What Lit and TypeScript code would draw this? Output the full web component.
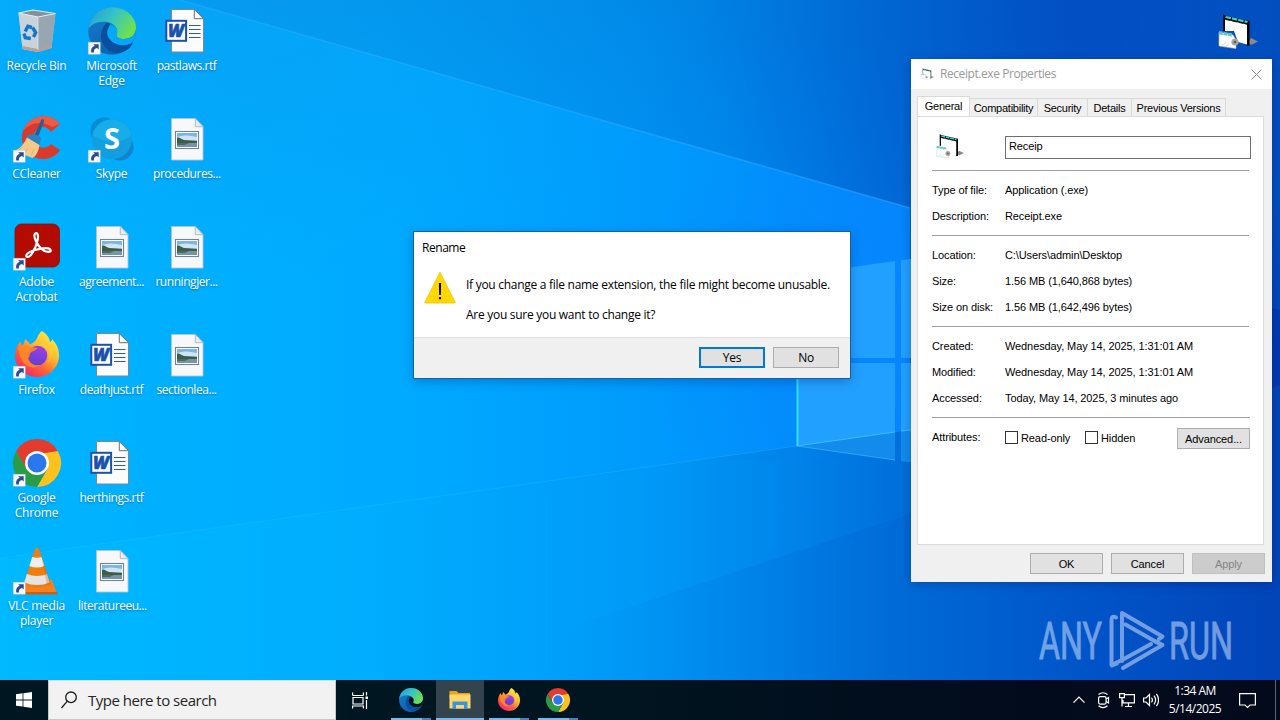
import { LitElement, css, html, svg } from 'lit'
import { customElement, property } from 'lit/decorators.js'
import { classMap } from 'lit/directives/class-map.js'

const shortcutArrow = svg`
  <rect x="0.2" y="35.2" width="12" height="12" fill="#f6f8fc" stroke="#b9c6d6" stroke-width=".5"/>
  <path d="M3.4 45.6c-.9-3.6.6-6.2 3.4-6.7l-1.5-1.7h5.4v5.4l-1.6-1.5c-2.2.3-3.5 1.7-3.2 4.5z" fill="#2b4c8c"/>
`

const exeShape = svg`
  <path d="M33 24l7 3.500-7 3.500-3-3z" fill="#8b8b8b"/>
  <path d="M5.200 0l1.800 1.500L31.500 7V31.500h-3V11L7 6v11H5.200z" fill="#000"/>
  <path d="M7 5.500L29 10.500V30.500l-9-2.500-4-11H7z" fill="#fff"/>
  <path d="M7.500 3L29.500 8" stroke="#3fd0cb" stroke-width="2.300" stroke-dasharray="5.500 1"/>
  <path d="M7.500 5.400L29 10.200" stroke="#111" stroke-width=".9" stroke-dasharray="4.500 2.300"/>
  <path d="M1 18l14 3 3 5v8.500L1 32z" fill="#fff" stroke="#b9c0c6" stroke-width=".6"/>
  <path d="M1 18.700l13 2.200" stroke="#62c6c8" stroke-width="3.200" stroke-dasharray="4 .6"/>
  <path d="M4 31.500l4-3M7 33l4-3" stroke="#d5d5dc" stroke-width="1"/>
  <circle cx="17" cy="28" r="3.600" fill="#a9a79b"/>
  <circle cx="17" cy="28" r="1.300" fill="#5d5d55"/>
`

const edgeShape = svg`
  <defs>
    <linearGradient id="e1" x1="0" y1="0" x2="1" y2=".5">
      <stop offset="0" stop-color="#209ad8"/><stop offset=".5" stop-color="#35c1c9"/><stop offset="1" stop-color="#6be053"/>
    </linearGradient>
    <linearGradient id="e2" x1="0" y1="0" x2=".4" y2="1">
      <stop offset="0" stop-color="#1480cb"/><stop offset="1" stop-color="#0d62b4"/>
    </linearGradient>
  </defs>
  <circle cx="24" cy="24" r="23.800" fill="url(#e2)"/>
  <path d="M.4 22C2 9 12 .2 24 .2 38 .2 48 10 48 20.500c0 7-5 11.500-12 11.500-6 0-8.500-2.500-7.500-4.500 2.500-4-1-11-9.500-12.500C10 13.500 3 17 .4 22z" fill="url(#e1)"/>
  <path d="M19 15.500c-5 5-7.500 12-5 19C17.500 44 27 48.500 36 44.500c4-1.800 6.500-4 8.300-7.200.5-1-.2-1.500-1.200-1-7.500 3.800-18 1.700-22.500-5.500-2.500-4.200-2-9.500 2.200-13.600z" fill="#0a4f9d"/>
  <path d="M43.100 36.300c-7.500 3.800-18 1.700-22.500-5.500-2.200-4-1.500-9.300 2.200-13.600 6 2.200 8 6.800 5.700 10.300-1 2 1.500 4.500 7.500 4.500 6 0 10.500-3.200 11.700-8 .2 5.300-1.500 9.500-4.600 12.300z" fill="var(--edge-cut, #02a9fb)"/>
`

const chromeShape = svg`
  <path d="M3.200 12A24 24 0 0 1 44.800 12H24z" fill="#e33b2e"/>
  <path d="M44.800 12A24 24 0 0 1 24 48L34.400 30 34.400 18 24 12z" fill="#fcc31e"/>
  <path d="M24 48A24 24 0 0 1 3.200 12L13.600 30 24 34.500l10.400-4.500z" fill="#2a9c48"/>
  <path d="M3.200 12L13.600 30 20 16l24.800-4z" fill="#e33b2e"/>
  <circle cx="24" cy="24" r="12" fill="#fff"/>
  <circle cx="24" cy="24" r="9.500" fill="#2b78ee"/>
`

const firefoxShape = svg`
  <defs>
    <linearGradient id="f1" x1=".85" y1=".05" x2=".2" y2=".95">
      <stop offset="0" stop-color="#fff04a"/><stop offset=".4" stop-color="#ffb42c"/><stop offset=".68" stop-color="#ff6236"/><stop offset="1" stop-color="#f2246e"/>
    </linearGradient>
    <linearGradient id="f2" x1=".6" y1="0" x2=".3" y2="1">
      <stop offset="0" stop-color="#a13ce8"/><stop offset="1" stop-color="#5a43cf"/>
    </linearGradient>
  </defs>
  <path d="M29 0c5 3 7.500 7 8 11 1.500-.5 2-1.800 2-3 5 5 7.500 11 7 18-1 12-11 20-22 20S2 37 2 25c0-6 2-11 5.500-15 .3 2 1 3.500 2 4.500C11 12.800 12 9 12 8c2 1.500 4 3.500 5 5.500C21 12 24 8 24.500 6c1-2.500 2.500-5 4.500-6z" fill="url(#f1)"/>
  <circle cx="24.500" cy="24.500" r="9.800" fill="url(#f2)"/>
  <path d="M5 17c4-3.500 9-4 13-1.500 2 1 4.500 1.200 6.500 1.500-1 2.500-4.500 3-6 4-3 2-1 5-3.500 6 1 6 7 8.500 12 7-5 4-13 3-17-3-3-4.500-4-9-5-14z" fill="#ff8a24" opacity=".88"/>
  <path d="M25 15c5-1.500 10 1.500 11.500 6 1 4 0 8-2 11 6-4 7-13 1-18-3-2.500-7-2-10.500 1z" fill="#ffd03a" opacity=".75"/>
`

const wordShape = svg`
  <path d="M8.500 2.500h23l9 9v33.500h-32z" fill="#fcfcfd" stroke="#7b8794" stroke-width="1"/>
  <path d="M31.300 2.500v9.200h9.200z" fill="#fff" stroke="#66717c" stroke-width="1"/>
  <path d="M26 19.500h11.500M26 23.500h11.500M26 27.500h11.500M26 31.500h11.500" transform="translate(0 -1)" stroke="#2b5db0" stroke-width="1.100"/>
  <rect x="3.300" y="13.800" width="19.800" height="20" fill="#fff" stroke="#1a51ae" stroke-width="2"/>
  <text x="13" y="30" class="word-letter" text-anchor="middle">W</text>
`

const imageShape = svg`
  <path d="M8.500 3.500h24l7.500 8v33.500H8.500z" fill="#f7f8f9" stroke="#b5c3cd" stroke-width=".9"/>
  <path d="M32.300 3.500v8.200H40z" fill="#e9edf1" stroke="#9fb0bd" stroke-width=".8"/>
  <rect x="12.500" y="16.500" width="23" height="17" fill="#fff" stroke="#6e8596" stroke-width="1.100"/>
  <path d="M14 18h20v7H14z" fill="#7db5ea"/>
  <path d="M14 22q8-3 20 0v5H14z" fill="#cde5f5"/>
  <path d="M14 22.500c3-.5 4 1.500 7 2.500l13 .8V28H14z" fill="#3d5d44"/>
  <path d="M14 28h20v4H14z" fill="#7795a8"/>
  <path d="M14 28h12l-4 2h-8z" fill="#4c6b68"/>
`

const desktopIcons: Record<string, unknown> = {
  bin: svg`
    <path d="M5.500 6L9.500 42 25 45 38.500 41 42.500 6.500z" fill="#aebbc4"/>
    <path d="M5.500 6L25 9.500V45L9.500 42z" fill="#c8d3db"/>
    <path d="M25 9.500L42.500 6.500 38.500 41 25 45z" fill="#98a6b1"/>
    <path d="M9.200 39L25 42l13.800-3.600L38.400 41 25 45 9.500 42z" fill="#b99f97"/>
    <path d="M5.500 6L20 3l22.500 3.500L25 10z" fill="#83919c" stroke="#e3ecf2" stroke-width="1.200"/>
    <path d="M25 10v33" stroke="#dbe4ea" stroke-width=".8"/>
    <g fill="none" stroke="#1276cd" stroke-width="3.400">
      <path d="M12.200 24.500l2.700-5.200 4 1.200"/><path d="M19.500 20.500l3.200 5-2.200 4.500"/><path d="M17.800 31.500l-5.500-.8-1.300-4.200"/>
    </g>`,
  edge: svg`${edgeShape}${shortcutArrow}`,
  word: wordShape,
  image: imageShape,
  ccleaner: svg`
    <path d="M47 9C41 1 29-1 20 4 9 10 6 24 12 34c6 10 20 13 29 7 3-2 5-4 6-6l-9-6c-4 5-11 5-15 0-4-6-2-14 3-16 4-2 9-1 12 4z" fill="#d93a2b"/>
    <path d="M47 9C41 1 29-1 20 4c-5 2.500-8.500 7-10 12 7-8 18-11 29-4z" fill="#ee5a43"/>
    <path d="M28.500 4.500q3-1 2.500 2L25 22l-4-1z" fill="#245e94"/>
    <path d="M13 21q8-5 15 2l-2 9-12-8z" fill="#2f80c0"/>
    <path d="M14 22.500l12.500 7.500c-1 6-3 11-7 13L1 36c6-2 10-7 13-13.500z" fill="#f4c98a"/>
    <path d="M9 32l-5 5M15 33l-4 6M21 34l-3 7" stroke="#d9a869" stroke-width=".8"/>${shortcutArrow}`,
  skype: svg`
    <circle cx="16" cy="16" r="13.500" fill="#078bd4"/><circle cx="32" cy="32" r="13.500" fill="#1283d0"/>
    <circle cx="24" cy="24" r="20" fill="#119fe0"/>
    <path d="M4.500 20a20 20 0 0 1 39 0c-8 8-25 10-39 0z" fill="#18b0ea" opacity=".8"/>
    <text x="24" y="34" class="skype-letter" text-anchor="middle">S</text>${shortcutArrow}`,
  acrobat: svg`
    <rect x="2" y="1" width="44.500" height="43" rx="6.500" fill="#b30b00" stroke="#7c1712" stroke-width=".8"/>
    <path d="M14.500 34c-3-.5-1-4.500 7.500-7 7-2 14-2.500 15.500-.2 1.500 3-5 3-9-.8-5-4.500-8.500-13-6.500-15.200 2-2 4 1 2.500 6.700C22.500 26 17.500 34.500 14.500 34z" fill="none" stroke="#fff" stroke-width="2.200"/>${shortcutArrow}`,
  firefox: svg`${firefoxShape}${shortcutArrow}`,
  chrome: svg`${chromeShape}${shortcutArrow}`,
  vlc: svg`
    <path d="M12 33h27l5 14H7z" fill="#f58220"/>
    <path d="M7 45h37.500v2.500H7z" fill="#cf5f0c"/>
    <path d="M22 2q2-2 4 0l11.500 36q-13 6-27 0z" fill="#f17d0c"/>
    <path d="M19.200 10l-2.900 9q7.500 3 15.200 0L28.600 10q-4.700 1.500-9.400 0z" fill="#f0efed"/>
    <path d="M13.900 27l-2.700 8.500q13 5 25.500 0L34 27q-10 4-20.100 0z" fill="#e6e4e2"/>
    <path d="M27 3l7 35 4-1L26.500 2z" fill="#c95c05" opacity=".3"/>${shortcutArrow}`,
}

const files = [
  ['bin', 'Recycle Bin'],
  ['ccleaner', 'CCleaner'],
  ['acrobat', 'Adobe Acrobat'],
  ['firefox', 'Firefox'],
  ['chrome', 'Google Chrome'],
  ['vlc', 'VLC media player'],
  ['edge', 'Microsoft Edge'],
  ['skype', 'Skype'],
  ['image', 'agreement...'],
  ['word', 'deathjust.rtf'],
  ['word', 'herthings.rtf'],
  ['image', 'literatureeu...'],
  ['word', 'pastlaws.rtf'],
  ['image', 'procedures...'],
  ['image', 'runningjer...'],
  ['image', 'sectionlea...'],
]

@customElement('desktop-wallpaper')
export class DesktopWallpaper extends LitElement {
  static styles = css`
  :host {
    display: block;
  }

  svg {
    display: block;
    width: 1280px;
    height: 720px;
  }
`

  render() {
    return html`
      <svg viewBox="0 0 1280 720">
        <defs>
          <linearGradient id="base" gradientUnits="userSpaceOnUse" x1="0" y1="0" x2="1280" y2="0">
            <stop offset="0" stop-color="#00aefb"/>
            <stop offset=".3" stop-color="#00a6f8"/>
            <stop offset=".5" stop-color="#0096f4"/>
            <stop offset=".62" stop-color="#0083ea"/>
            <stop offset=".71" stop-color="#006dd9"/>
            <stop offset=".85" stop-color="#004fc6"/>
            <stop offset="1" stop-color="#0338b0"/>
          </linearGradient>
          <linearGradient id="beam" gradientUnits="userSpaceOnUse" x1="0" y1="0" x2="910" y2="0">
            <stop offset="0" stop-color="#00b4ff"/>
            <stop offset=".45" stop-color="#00aaff"/>
            <stop offset=".8" stop-color="#0095fc"/>
            <stop offset="1" stop-color="#0084fa"/>
          </linearGradient>
          <linearGradient id="top" gradientUnits="userSpaceOnUse" x1="560" y1="260" x2="640" y2="-20">
            <stop offset="0" stop-color="#0074e4" stop-opacity="0"/>
            <stop offset="1" stop-color="#0070cf" stop-opacity=".4"/>
          </linearGradient>
          <radialGradient id="dusk" gradientUnits="userSpaceOnUse" cx="1080" cy="20" r="380">
            <stop offset="0" stop-color="#0343bd" stop-opacity=".6"/>
            <stop offset=".45" stop-color="#034cc5" stop-opacity=".35"/>
            <stop offset="1" stop-color="#0350cc" stop-opacity="0"/>
          </radialGradient>
          <radialGradient id="left" gradientUnits="userSpaceOnUse" cx="200" cy="0" r="520" gradientTransform="scale(1 .55)">
            <stop offset="0" stop-color="#0c98ef" stop-opacity=".5"/>
            <stop offset="1" stop-color="#0c98ef" stop-opacity="0"/>
          </radialGradient>
          <linearGradient id="foot" gradientUnits="userSpaceOnUse" x1="0" y1="0" x2="800" y2="0">
            <stop offset="0" stop-color="#00b9ff"/>
            <stop offset=".4" stop-color="#00b0ff" stop-opacity=".9"/>
            <stop offset="1" stop-color="#009cff" stop-opacity="0"/>
          </linearGradient>
          <linearGradient id="line" gradientUnits="userSpaceOnUse" x1="60" y1="0" x2="910" y2="0">
            <stop offset="0" stop-color="#4cc4ff" stop-opacity=".15"/>
            <stop offset="1" stop-color="#39a6ff" stop-opacity=".5"/>
          </linearGradient>
          <linearGradient id="shade" gradientUnits="userSpaceOnUse" x1="560" y1="0" x2="900" y2="0">
            <stop offset="0" stop-color="#0060cc" stop-opacity="0"/>
            <stop offset="1" stop-color="#0060cc" stop-opacity=".3"/>
          </linearGradient>
          <radialGradient id="glow" gradientUnits="userSpaceOnUse" cx="900" cy="330" r="260">
            <stop offset="0" stop-color="#0a86ff" stop-opacity=".8"/>
            <stop offset="1" stop-color="#0a86ff" stop-opacity="0"/>
          </radialGradient>
        </defs>
        <rect width="1280" height="720" fill="url(#base)"/>
        <path d="M0 460H797L910 475V720H0z" fill="url(#foot)"/>
        <path d="M180 0H1280V310L910 208z" fill="url(#top)"/>
        <rect x="600" width="680" height="420" fill="url(#dusk)"/>
        <path d="M0 0H180L910 208V430L797 446 0 558z" fill="url(#beam)"/>
        <path d="M180 0L910 208V430L797 446 380 500V57z" fill="url(#glow)"/>
        <rect width="760" height="300" fill="url(#left)"/>
        <path d="M180 0L910 208" stroke="url(#line)" stroke-width="1.500"/>
        <path d="M0 558L797 446" stroke="#43c7ff" stroke-opacity=".2"/>
        <path d="M1280 385L910 514 560 630 420 680H1280z" fill="url(#shade)"/>
        <path d="M797 275L895 261V358H797zM901 260L911 259V358H901zM797 363H895V460L797 446zM901 363H911V462L901 461z" fill="#22a0ff"/>
        <path d="M797 446L895 432V460zM901 431L911 430V462L901 461z" fill="#0e84e6" opacity=".75"/>
        <path d="M797 446L895 432M901 431L911 430" stroke="#3fc5ff" stroke-opacity=".8"/>
        <path d="M797.500 276V446" stroke="#2fe0ff" stroke-width="2"/>
        <path d="M797 446L895 460" stroke="#43b9ff" stroke-opacity=".6"/>
      </svg>
    `
  }
}

@customElement('win-button')
export class WinButton extends LitElement {
  @property({ type: String })
  type = 'default'

  static styles = css`
  :host {
    display: flex;
    height: 21px;
  }

  .button {
    flex: 1;
    display: flex;
    align-items: center;
    justify-content: center;
    box-sizing: border-box;
    border: 1px solid #adadad;
    background: #e1e1e1;
    color: #000;
    white-space: nowrap;
  }

  .button.primary {
    border: 2px solid #0078d7;
  }

  .button.disabled {
    background: #cccccc;
    border-color: #bfbfbf;
    color: #838383;
  }
`

  render() {
    const classes = {
      'button': true,
      'primary': this.type === 'primary',
      'disabled': this.type === 'disabled',
    }
    return html`<div class=${classMap(classes)}><slot></slot></div>`
  }
}

@customElement('desktop-icons')
export class DesktopIcons extends LitElement {
  static styles = css`
  :host {
    display: grid;
    grid-template: repeat(6, 108px) / repeat(3, 75px);
    grid-auto-flow: column;
    padding-top: 7px;
    width: 225px;
    font: 12px/15px "Open Sans", "Noto Sans", sans-serif;
    color: #fff;
  }

  .item {
    display: flex;
    flex-direction: column;
  }

  .item svg {
    width: 48px;
    height: 48px;
    margin-left: 13px;
    overflow: visible;
  }

  .label {
    margin: 3px 2px 0 0;
    padding: 0 3px;
    text-align: center;
    letter-spacing: -0.25px;
    text-shadow: 0 1px 2px rgba(0, 40, 90, 0.45);
  }

  .label.file {
    letter-spacing: -0.45px;
  }

  .word-letter {
    font: italic 900 17px "Open Sans", sans-serif;
    fill: #1a51ae;
    stroke: #1a51ae;
    stroke-width: 0.6px;
  }

  .skype-letter {
    font: 700 29px "Open Sans", sans-serif;
    fill: #fff;
  }
`

  render() {
    return files.map(([icon, label]) => html`
      <div class="item">
        <svg viewBox="0 0 48 48">${desktopIcons[icon]}</svg>
        <div class=${classMap({ label: true, file: label.includes('.') })}>${label}</div>
      </div>
    `)
  }
}

@customElement('properties-window')
export class PropertiesWindow extends LitElement {
  static styles = css`
  :host {
    display: flex;
    flex-direction: column;
    box-sizing: border-box;
    width: 361px;
    height: 523px;
    background: #f0f0f0;
    font: 11px/14px "Liberation Sans", Arial, sans-serif;
    letter-spacing: -0.1px;
    color: #000;
    white-space: nowrap;
    box-shadow: 0 2px 9px rgba(0, 20, 80, 0.3);
  }

  .title {
    display: flex;
    align-items: center;
    height: 30px;
    padding: 0 10px;
    background: #fff;
    color: #999;
    font: 12px/16px "Open Sans", "Noto Sans", sans-serif;
    letter-spacing: -0.43px;
  }

  .title .exe {
    width: 13px;
    height: 12px;
    margin-right: 6px;
    opacity: 0.85;
  }

  .close {
    width: 11px;
    height: 11px;
    margin-left: auto;
  }

  .tabs {
    display: flex;
    align-items: flex-end;
    height: 22px;
    margin: 6px 6px -1px;
    letter-spacing: -0.25px;
  }

  .tab {
    box-sizing: border-box;
    height: 19px;
    padding-top: 2px;
    border: 1px solid #d9d9d9;
    border-left: 0;
    text-align: center;
  }

  .tab.active {
    height: 22px;
    margin-bottom: -1px;
    border-left: 1px solid #d9d9d9;
    border-bottom: 0;
    background: #fff;
  }

  .w1 { width: 53px; }
  .w2 { width: 68px; }
  .w3 { width: 50px; }
  .w4 { width: 44px; }
  .w5 { width: 94px; }

  .panel {
    box-sizing: border-box;
    width: 347px;
    height: 429px;
    margin-left: 6px;
    padding: 19px 12px 0 14px;
    border: 1px solid #dcdcdc;
    background: #fff;
  }

  .head {
    display: flex;
    height: 34px;
  }

  .head .exe {
    width: 28px;
    height: 25px;
    margin: -2px 41px 0 4px;
  }

  .field {
    box-sizing: border-box;
    width: 246px;
    height: 23px;
    padding: 2px 3px;
    border: 1px solid #6f6f6f;
  }

  .group {
    width: 317px;
    padding: 6px 0;
    border-top: 1px solid #a0a0a0;
  }

  .row {
    display: grid;
    grid-template-columns: 73px 1fr;
    align-items: center;
    height: 26px;
  }

  .attributes {
    display: flex;
    align-items: flex-start;
    padding-top: 10px;
    border-top: 1px solid #a0a0a0;
    width: 318px;
  }

  .attributes .name {
    width: 73px;
    padding-top: 2px;
  }

  .check {
    display: flex;
    gap: 3px;
    width: 80px;
    padding-top: 3px;
  }

  .box {
    box-sizing: border-box;
    width: 13px;
    height: 13px;
    border: 1px solid #333;
  }

  .advanced {
    width: 73px;
    margin-left: auto;
  }

  .buttons {
    display: flex;
    justify-content: flex-end;
    gap: 8px;
    padding: 8px 7px 0 0;
  }

  .buttons win-button {
    width: 73px;
  }
`

  groups = [
    [['Type of file:', 'Application (.exe)'], ['Description:', 'Receipt.exe']],
    [['Location:', 'C:\\Users\\admin\\Desktop'], ['Size:', '1.56 MB (1,640,868 bytes)'], ['Size on disk:', '1.56 MB (1,642,496 bytes)']],
    [['Created:', 'Wednesday, May 14, 2025, 1:31:01 AM'], ['Modified:', 'Wednesday, May 14, 2025, 1:31:01 AM'], ['Accessed:', 'Today, May 14, 2025, 3 minutes ago']],
  ]

  render() {
    return html`
      <div class="title">
        <svg class="exe" viewBox="0 0 40 36">${exeShape}</svg>
        <span>Receipt.exe Properties</span>
        <svg class="close" viewBox="0 0 11 11"><path d="M.5.5l10 10M10.5.5l-10 10" stroke="#8a8a8a"/></svg>
      </div>
      <div class="tabs">
        <div class="tab active w1">General</div>
        <div class="tab w2">Compatibility</div>
        <div class="tab w3">Security</div>
        <div class="tab w4">Details</div>
        <div class="tab w5">Previous Versions</div>
      </div>
      <div class="panel">
        <div class="head">
          <svg class="exe" viewBox="0 0 40 36">${exeShape}</svg>
          <div class="field">Receip</div>
        </div>
        ${this.groups.map(rows => html`
          <div class="group">
            ${rows.map(([name, value]) => html`<div class="row"><span>${name}</span><span>${value}</span></div>`)}
          </div>
        `)}
        <div class="attributes">
          <span class="name">Attributes:</span>
          <span class="check"><span class="box"></span>Read-only</span>
          <span class="check"><span class="box"></span>Hidden</span>
          <win-button class="advanced">Advanced...</win-button>
        </div>
      </div>
      <div class="buttons">
        <win-button>OK</win-button>
        <win-button>Cancel</win-button>
        <win-button type="disabled">Apply</win-button>
      </div>
    `
  }
}

@customElement('rename-dialog')
export class RenameDialog extends LitElement {
  static styles = css`
  :host {
    display: flex;
    flex-direction: column;
    box-sizing: border-box;
    width: 438px;
    height: 148px;
    border: 1px solid #17609f;
    background: #fff;
    font: 12px/15px "Open Sans", "Noto Sans", sans-serif;
    color: #000;
    white-space: nowrap;
    box-shadow: 0 3px 10px rgba(0, 40, 110, 0.3);
  }

  .title {
    padding: 8px 8px 0;
    height: 33px;
    box-sizing: border-box;
    letter-spacing: -0.45px;
  }

  .body {
    display: flex;
    gap: 10px;
    height: 72px;
    padding-left: 10px;
  }

  .warning {
    width: 32px;
    height: 33px;
    margin-top: 6px;
  }

  .text {
    display: flex;
    flex-direction: column;
    gap: 15px;
    padding-top: 12px;
    letter-spacing: -0.28px;
  }

  .footer {
    display: flex;
    flex: 1;
    justify-content: flex-end;
    gap: 8px;
    padding: 9px 11px 0 0;
    border-top: 1px solid #dfdfdf;
    background: #f0f0f0;
    letter-spacing: -0.3px;
  }

  .footer win-button {
    width: 66px;
  }
`

  render() {
    return html`
      <div class="title">Rename</div>
      <div class="body">
        <svg class="warning" viewBox="0 0 32 33">
          <path d="M16 1L31.500 32H.5z" fill="#ffd800" stroke="#f2c211" stroke-width=".8"/>
          <path d="M14.900 12h2.200l-.3 12h-1.600zM14.900 26h2.200v2.300h-2.200z" fill="#000"/>
        </svg>
        <div class="text">
          <span>If you change a file name extension, the file might become unusable.</span>
          <span>Are you sure you want to change it?</span>
        </div>
      </div>
      <div class="footer">
        <win-button type="primary">Yes</win-button>
        <win-button>No</win-button>
      </div>
    `
  }
}

@customElement('task-bar')
export class TaskBar extends LitElement {
  static styles = css`
  :host {
    display: flex;
    height: 40px;
    background: linear-gradient(90deg, #001722 0%, #001520 45%, #020b1c 80%, #030a1b 100%);
    font: 12px/18px "Open Sans", "Noto Sans", sans-serif;
    color: #fff;
    white-space: nowrap;
  }

  .start,
  .app {
    display: flex;
    align-items: center;
    justify-content: center;
    width: 48px;
  }

  .search {
    display: flex;
    align-items: center;
    box-sizing: border-box;
    width: 288px;
    padding-left: 12px;
    gap: 11px;
    border: 1px solid #c8c8c8;
    border-top-color: #dcdcdc;
    background: #f2f2f2;
    color: #262626;
    font-size: 15px;
    letter-spacing: -0.5px;
  }

  .apps {
    display: flex;
    gap: 1px;
    padding-left: 3px;
  }

  .app {
    position: relative;
  }

  .app::after {
    content: '';
    position: absolute;
    left: 4px;
    right: 4px;
    bottom: 0;
    height: 2px;
    background: linear-gradient(90deg, #76b9ed 78%, #4784b5 78%);
  }

  .app.active {
    background: #33444e;
  }

  .app.active::after {
    left: 0;
    right: 0;
    background: #76b9ed;
  }

  .app svg {
    --edge-cut: #001520;
    width: 24px;
    height: 24px;
    overflow: visible;
  }

  .tray {
    display: flex;
    align-items: center;
    margin-left: auto;
    fill: none;
    stroke: #fff;
  }

  .clock {
    width: 72px;
    text-align: center;
    letter-spacing: -0.5px;
  }

  .bell {
    margin-left: 8px;
  }

  .peek {
    width: 4px;
    height: 40px;
    margin-left: 19px;
    border-left: 1px solid #5c6470;
  }
`

  render() {
    return html`
      <div class="start">
        <svg width="16" height="16" viewBox="0 0 16 16"><path d="M0 2.200l6.600-.9v6.200H0zM7.400 1.200L16 0v7.500H7.400zM0 8.400h6.600v6.200L0 13.700zM7.400 8.400H16V16l-8.600-1.200z" fill="#fff"/></svg>
      </div>
      <div class="search">
        <svg width="16" height="18" viewBox="0 0 16 18" fill="none" stroke="#1c1c1c" stroke-width="1.300"><circle cx="10" cy="6.300" r="5.300"/><path d="M6.300 10.200L.5 17"/></svg>
        <span>Type here to search</span>
      </div>
      <div class="start">
        <svg width="17" height="17" viewBox="0 0 17 17" fill="none" stroke="#fff" stroke-width="1.200"><path d="M.6 3.500V.6M11.400 3.500V.6M.6 3.500h10.800M1 5.500h10v6.500H1zM.6 16.500v-2.500h10.800v2.500M14.500 0v3.500M14.500 8v9"/><path d="M13.500 4.500h2.500v2.500h-2.500z" fill="#fff" stroke="none"/></svg>
      </div>
      <div class="apps">
        <div class="app"><svg viewBox="0 0 48 48">${edgeShape}</svg></div>
        <div class="app active">
          <svg viewBox="0 0 24 24">
            <path d="M1.500 3h7l2 2H22V10H1.500z" fill="#e8a21c"/>
            <path d="M1.500 6.500H22.500V20.500h-21z" fill="#ffd668"/>
            <path d="M4.500 13.500h15v7.500H16v-4H8v4H4.500z" fill="#3a93dc"/>
            <path d="M8 17h8v3.500H8z" fill="#f4d47d"/>
          </svg>
        </div>
        <div class="app"><svg viewBox="0 0 48 48">${firefoxShape}</svg></div>
        <div class="app"><svg viewBox="0 0 48 48">${chromeShape}</svg></div>
      </div>
      <div class="tray">
        <svg width="94" height="20" viewBox="0 0 94 20" stroke-width="1.200">
          <path d="M8.500 12.700L14 7.200l5.500 5.500"/>
          <path d="M33.500 4.500q4.500-3.500 9 0M33.500 15.800q4.500 3.500 9 0"/>
          <rect x="33.600" y="6.600" width="7.500" height="7.500" rx="1.500"/>
          <path d="M41 9l2.500-1.500v5.500L41 11.600"/>
          <path d="M59.500 4.600h9.900v8.200H58V10M60 16.500h7M63.500 13v3.500M54.600 3.600h4.800v4H54.600zM57 7.600v9"/>
          <path d="M78.600 8h2.400l3.500-3.500v11L81 12h-2.400zM86.500 7.600q1.800 2.400 0 4.800M89 5.700q3.200 4.300 0 8.600M91.400 3.800q4.400 6.200 0 12.400"/>
        </svg>
        <div class="clock">1:34 AM<br>5/14/2025</div>
        <svg class="bell" width="17" height="17" viewBox="0 0 17 17" stroke-width="1.200"><path d="M.6 1.600h15.800v11.400H11L8.500 15.500 6 13H.6z"/></svg>
        <div class="peek"></div>
      </div>
    `
  }
}

@customElement('app-root')
export class AppRoot extends LitElement {
  static styles = css`
  :host {
    display: flex;
    flex-direction: column;
    position: relative;
    width: 1280px;
    height: 720px;
    overflow: hidden;
  }

  desktop-wallpaper {
    position: absolute;
    inset: 0;
  }

  .desktop {
    position: relative;
    flex: 1;
  }

  task-bar {
    position: relative;
  }

  rename-dialog {
    position: absolute;
    left: 413px;
    top: 231px;
  }

  properties-window {
    position: absolute;
    left: 911px;
    top: 59px;
  }

  .receipt {
    position: absolute;
    left: 1218px;
    top: 14px;
    width: 40px;
    height: 36px;
  }

  .brand {
    position: absolute;
    left: 1036px;
    top: 608px;
    overflow: visible;
    opacity: 0.52;
  }

  .brand text {
    font: 400 51px Roboto, sans-serif;
    fill: #d9e6ff;
    stroke: #d9e6ff;
    stroke-width: 0.8px;
  }
`

  render() {
    return html`
      <desktop-wallpaper></desktop-wallpaper>
      <div class="desktop">
        <desktop-icons></desktop-icons>
        <svg class="receipt" viewBox="0 0 40 36">${exeShape}</svg>
        <properties-window></properties-window>
        <rename-dialog></rename-dialog>
        <svg class="brand" width="220" height="72" viewBox="0 0 220 72">
          <text x="3" y="51" textLength="63" lengthAdjust="spacingAndGlyphs">ANY</text>
          <text x="133" y="51" textLength="64" lengthAdjust="spacingAndGlyphs">RUN</text>
          <path d="M80 9.500Q75.500 7 75.500 12V57L87 51.500 115 36M86 53V5L126.500 28.500 123 31M89.500 16.500L122 35M87 60L126.500 37 119 33M81 55.500L76 57.500" fill="none" stroke="#d9e6ff" stroke-width="4" stroke-linejoin="round" stroke-linecap="round"/>
        </svg>
      </div>
      <task-bar></task-bar>
    `
  }
}

declare global {

  interface HTMLElementTagNameMap {
    'app-root': AppRoot
  }
}
